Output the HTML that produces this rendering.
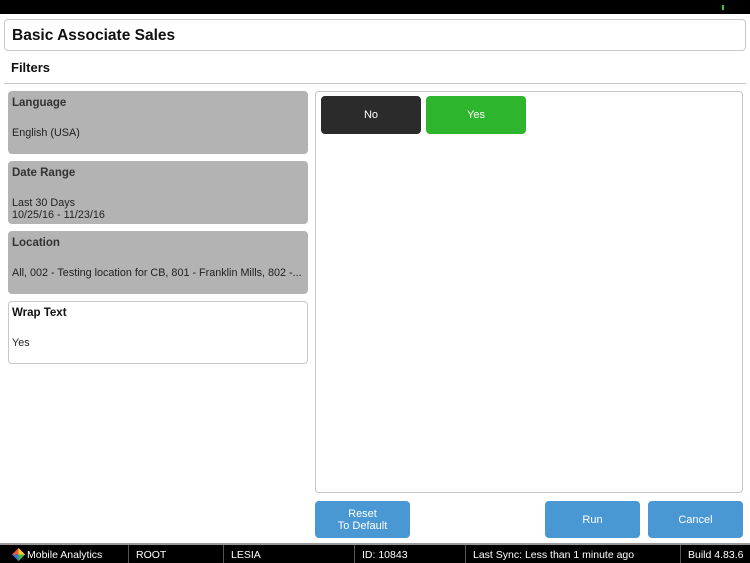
<!DOCTYPE html>
<html><head><style>
*{margin:0;padding:0;box-sizing:border-box}
body{width:750px;height:563px;background:#fff;font-family:"Liberation Sans",sans-serif;position:relative;overflow:hidden;color:#111}
.a{position:absolute}
.top{left:0;top:0;width:750px;height:14px;background:#000}
.title{left:4px;top:19px;width:742px;height:32px;border:1px solid #c8c8c8;border-radius:4px;font-size:15.5px;font-weight:bold;padding:7px 0 0 7px}
.filt{left:11px;top:60px;font-size:13px;font-weight:bold}
.hr{left:4px;top:83px;width:742px;height:1px;background:#c8c8c8}
.box{left:8px;width:300px;height:63px;border-radius:4px;background:#b3b3b3;padding:6px 0 0 4px;font-size:10.8px;color:#222}
.box b{display:block;font-size:11.5px;color:#333;margin-bottom:18px}
.box.w{background:#fff;border:1px solid #c8c8c8;padding:5px 0 0 3px}
.box.w b{color:#111}
.panel{left:315px;top:91px;width:428px;height:402px;border:1px solid #c8c8c8;border-radius:4px}
.btn{border-radius:4px;color:#fff;font-size:11px;display:flex;align-items:center;justify-content:center;text-align:center;line-height:12px}
.status{left:0;top:545px;width:750px;height:18px;background:#000;color:#fff;font-size:10.5px}
.status span{position:absolute;top:4px}
.sep{position:absolute;top:0;width:1px;height:18px;background:#555}
</style></head><body>
<div class="a top"></div>
<div class="a" style="left:722px;top:5px;width:2px;height:5px;background:#3c3"></div>
<div class="a title">Basic Associate Sales</div>
<div class="a filt">Filters</div>
<div class="a hr"></div>
<div class="a box" style="top:91px"><b>Language</b>English (USA)</div>
<div class="a box" style="top:161px"><b style="margin-bottom:18px">Date Range</b>Last 30 Days<br>10/25/16 - 11/23/16</div>
<div class="a box" style="top:231px"><b>Location</b>All, 002 - Testing location for CB, 801 - Franklin Mills, 802 -...</div>
<div class="a box w" style="top:301px"><b>Wrap Text</b>Yes</div>
<div class="a panel"></div>
<div class="a btn" style="left:321px;top:96px;width:100px;height:38px;background:#2b2b2b">No</div>
<div class="a btn" style="left:426px;top:96px;width:100px;height:38px;background:#2db52d">Yes</div>
<div class="a btn" style="left:315px;top:501px;width:95px;height:37px;background:#4a98d3">Reset<br>To Default</div>
<div class="a btn" style="left:545px;top:501px;width:95px;height:37px;background:#4a98d3">Run</div>
<div class="a btn" style="left:648px;top:501px;width:95px;height:37px;background:#4a98d3">Cancel</div>
<div class="a" style="left:0;top:543px;width:750px;height:2px;background:#999"></div>
<div class="a status">
<svg style="position:absolute;left:12px;top:3px" width="13" height="13" viewBox="0 0 13 13"><path d="M6.5 0L13 6.5 6.5 13 0 6.5Z" fill="#e53"/><path d="M6.5 0L13 6.5 6.5 6.5Z" fill="#fc3"/><path d="M0 6.5L6.5 6.5 6.5 13Z" fill="#37c"/><path d="M6.5 6.5L13 6.5 6.5 13Z" fill="#4b4"/></svg>
<span style="left:27px">Mobile Analytics</span>
<div class="sep" style="left:128px"></div><span style="left:136px">ROOT</span>
<div class="sep" style="left:223px"></div><span style="left:231px">LESIA</span>
<div class="sep" style="left:354px"></div><span style="left:362px">ID: 10843</span>
<div class="sep" style="left:465px"></div><span style="left:473px">Last Sync: Less than 1 minute ago</span>
<div class="sep" style="left:680px"></div><span style="left:688px">Build 4.83.6</span>
</div>
</body></html>
